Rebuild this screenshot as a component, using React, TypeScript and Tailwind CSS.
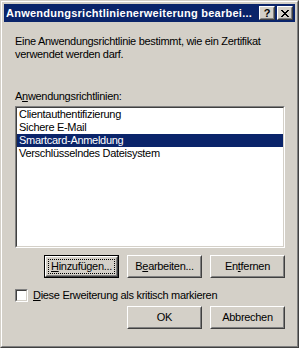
const face = "font-['Liberation_Sans',Arial,sans-serif]";

function Bevel({
  children,
  className = "",
}: {
  children: React.ReactNode;
  className?: string;
}) {
  // raised Win2000 bevel: white/dark outer, light/grey inner
  return (
    <div
      className={`border border-t-white border-l-white border-r-[#404040] border-b-[#404040] ${className}`}
    >
      <div className="flex h-full w-full items-center justify-center border border-t-[#d4d0c8] border-l-[#d4d0c8] border-r-[#808080] border-b-[#808080] bg-[#d4d0c8]">
        {children}
      </div>
    </div>
  );
}

function Button({
  label,
  hot,
  isDefault,
}: {
  label: string;
  hot: number;
  isDefault?: boolean;
}) {
  const text = (
    <span className="text-[11px] leading-[13px] tracking-[-0.3px] text-black">
      {label.slice(0, hot)}
      <span className="underline underline-offset-[1px]">{label[hot]}</span>
      {label.slice(hot + 1)}
    </span>
  );

  if (isDefault) {
    return (
      <div className="relative h-[23px] w-[75px] border border-black">
        <Bevel className="h-full w-full">{text}</Bevel>
        <div className="pointer-events-none absolute inset-[3px] border border-dotted border-black" />
      </div>
    );
  }
  return <Bevel className="h-[23px] w-[75px]">{text}</Bevel>;
}

function Sunken({
  children,
  className = "",
}: {
  children: React.ReactNode;
  className?: string;
}) {
  return (
    <div
      className={`border border-t-[#808080] border-l-[#808080] border-r-white border-b-white ${className}`}
    >
      <div className="h-full w-full border border-t-[#404040] border-l-[#404040] border-r-[#d4d0c8] border-b-[#d4d0c8] bg-white">
        {children}
      </div>
    </div>
  );
}

const policies = [
  "Clientauthentifizierung",
  "Sichere E-Mail",
  "Smartcard-Anmeldung",
  "Verschlüsselndes Dateisystem",
];

export default function App() {
  return (
    <div
      className={`h-[348px] w-[299px] border border-t-[#d4d0c8] border-l-[#d4d0c8] border-r-[#404040] border-b-[#404040] ${face}`}
    >
      <div className="flex h-full w-full flex-col border border-t-white border-l-white border-r-[#808080] border-b-[#808080] bg-[#d4d0c8] p-[2px]">
        {/* caption */}
        <div className="flex h-[18px] shrink-0 items-center bg-[#0a246a] pl-[2px] pr-[2px]">
          <span className="flex-1 whitespace-nowrap text-[11px] font-bold leading-[13px] tracking-[0.25px] text-white">
            Anwendungsrichtlinienerweiterung bearbei...
          </span>
          <Bevel className="h-[14px] w-[16px]">
            <span className="text-[11px] font-bold leading-[11px] text-black">?</span>
          </Bevel>
          <Bevel className="ml-[2px] h-[14px] w-[16px]">
            <svg width="8" height="7" viewBox="0 0 8 7" shapeRendering="crispEdges">
              <path
                d="M0 0h2v1h-2zM6 0h2v1h-2zM1 1h2v1h-2zM5 1h2v1h-2zM2 2h4v1h-4zM3 3h2v1h-2zM2 4h4v1h-4zM1 5h2v1h-2zM5 5h2v1h-2zM0 6h2v1h-2zM6 6h2v1h-2z"
                fill="#000"
              />
            </svg>
          </Bevel>
        </div>

        {/* client area */}
        <div className="flex flex-col pl-[11px] text-[11px] leading-[13px] tracking-[-0.3px] text-black">
          <p className="mt-[13px] w-[262px]">
            Eine Anwendungsrichtlinie bestimmt, wie ein Zertifikat verwendet werden darf.
          </p>

          <div className="mt-[29px]">
            A<span className="underline underline-offset-[1px]">n</span>wendungsrichtlinien:
          </div>

          <Sunken className="mt-[3px] h-[142px] w-[270px]">
            <ul className="flex flex-col">
              {policies.map((p, i) => (
                <li
                  key={p}
                  className={`h-[13px] pl-[2px] ${
                    i === 2 ? "bg-[#0a246a] text-white" : "text-black"
                  }`}
                >
                  {p}
                </li>
              ))}
            </ul>
          </Sunken>

          <div className="mt-[7px] flex w-[270px] justify-end gap-[8px]">
            <Button label="Hinzufügen..." hot={0} isDefault />
            <Button label="Bearbeiten..." hot={1} />
            <Button label="Entfernen" hot={2} />
          </div>

          <div className="mt-[11px] flex items-center gap-[5px]">
            <Sunken className="h-[13px] w-[13px]">
              <span />
            </Sunken>
            <span>
              <span className="underline underline-offset-[1px]">D</span>iese Erweiterung als kritisch markieren
            </span>
          </div>

          <div className="mt-[4px] flex w-[270px] justify-end gap-[8px]">
            <Bevel className="h-[23px] w-[75px]">
              <span className="text-[11px] leading-[13px]">OK</span>
            </Bevel>
            <Bevel className="h-[23px] w-[75px]">
              <span className="text-[11px] leading-[13px]">Abbrechen</span>
            </Bevel>
          </div>
        </div>
      </div>
    </div>
  );
}
